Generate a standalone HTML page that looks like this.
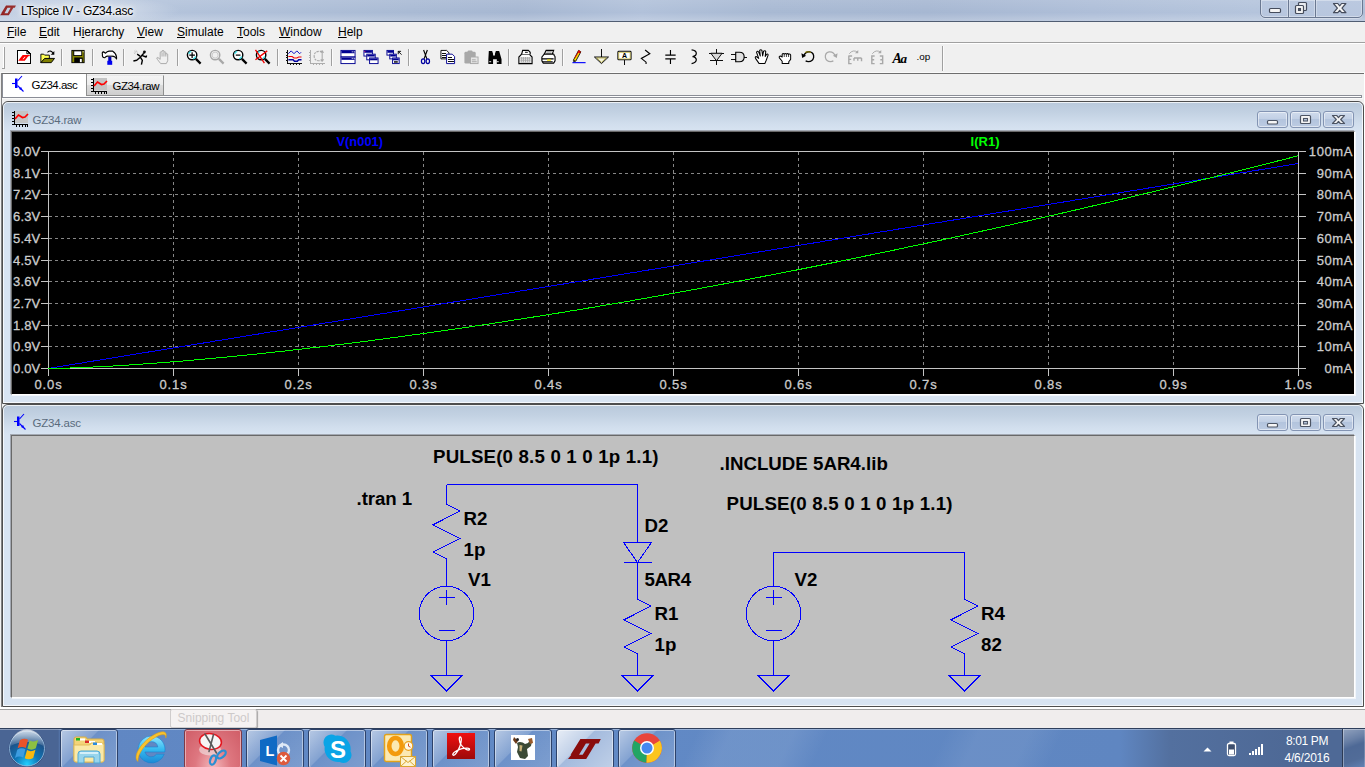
<!DOCTYPE html>
<html lang="en">
<head>
<meta charset="utf-8">
<title>LTspice IV - GZ34.asc</title>
<style>
html,body{margin:0;padding:0}
body{width:1365px;height:767px;overflow:hidden;position:relative;background:#f0f0f0;font-family:"Liberation Sans",Arial,sans-serif;font-size:12px;color:#000}
.abs{position:absolute}
#titlebar{left:0;top:0;width:1365px;height:21px;background:linear-gradient(90deg,#bccae0 0,#b3c3db 12%,#a9bad4 30%,#a6b7d2 38%,#b1c1da 47%,#a8b9d3 56%,#a6b7d2 68%,#aebed8 80%,#b4c4dc 92%,#adbdd7 100%);border-bottom:1px solid #505d72}
#titlebar:after{content:"";position:absolute;left:0;right:0;top:0;height:21px;background:linear-gradient(180deg,rgba(255,255,255,.10) 0,rgba(255,255,255,0) 60%,rgba(255,255,255,.22) 100%)}
#title{left:21px;top:4px;font-size:12px;line-height:15px;letter-spacing:-.25px;white-space:nowrap;color:#000;text-shadow:0 0 6px #fff,0 0 6px #fff,0 0 3px #fff}
#capbtns{left:1260px;top:-1px;width:101px;height:17px;border:1px solid #6a7891;border-radius:0 0 5px 5px;background:linear-gradient(180deg,#bbc9e0 0,#b7c6de 100%);box-shadow:inset 0 0 0 1px rgba(255,255,255,.35),0 1px 0 rgba(255,255,255,.35)}
#capbtns i{position:absolute;top:0;width:1px;height:17px;background:#6a7891;box-shadow:1px 0 0 rgba(255,255,255,.3),-1px 0 0 rgba(255,255,255,.3)}
#menubar{left:0;top:22px;width:1365px;height:20px;background:#f0f0f0;border-bottom:1px solid #a0a0a0}
#menubar span{position:absolute;top:3px;line-height:15px;white-space:nowrap}
#menubar u{text-decoration:underline}
#toolbar{left:0;top:43px;width:1365px;height:29px;background:#f0f0f0;border-top:1px solid #fff;box-sizing:border-box}
.tsep{position:absolute;top:5px;width:1px;height:17px;background:#a0a0a0;border-right:1px solid #fbfbfb}
.tb{position:absolute;top:5px;width:16px;height:16px}
#tabs{left:0;top:72px;width:1365px;height:29px;background:#f0f0f0}
.tab{position:absolute;box-sizing:border-box;white-space:nowrap}
.mdi{position:absolute;left:2px;width:1362px;height:303px;box-sizing:border-box;border:1px solid #4e4e4e;border-radius:6px 6px 0 0;background:linear-gradient(180deg,#b9c9db 0,#c2d1e2 10px,#d1deed 22px,#d8e4f2 30px,#d8e4f2 100%)}
.mdi:before{content:"";position:absolute;left:0;top:0;right:0;bottom:0;border:1px solid rgba(255,255,255,.75);border-radius:5px 5px 0 0}
.mtitle{position:absolute;left:29.500px;top:10.500px;line-height:15px;font-size:11.500px;letter-spacing:-.2px;color:#5a6b7d;white-space:nowrap}
.mbtn{position:absolute;top:9px;height:17px;box-sizing:border-box;border:1px solid #8394b3;border-radius:3px;background:linear-gradient(180deg,#cfdbec 0,#c2d0e5 45%,#b3c4dd 50%,#bccbe2 100%);box-shadow:inset 0 0 0 1px rgba(255,255,255,.5)}
.client{position:absolute;left:8px;top:29px;width:1344px;height:264px;box-sizing:border-box;border:1px solid;border-color:#696969 #fff #fff #696969;box-shadow:-1px -1px 0 #a3a9b3,1px 1px 0 #f2f6fb}
#status{left:0;top:707px;width:1365px;height:21px;background:#f0eded;border-top:2px solid #fff;box-sizing:border-box}
#taskbar{left:0;top:728px;width:1365px;height:39px;background:linear-gradient(115deg,rgba(255,255,255,0) 0,rgba(255,255,255,0) 50.500%,rgba(255,255,255,.09) 53%,rgba(255,255,255,.09) 57.500%,rgba(255,255,255,0) 60%,rgba(255,255,255,0) 68.500%,rgba(255,255,255,.07) 71%,rgba(255,255,255,.07) 74.500%,rgba(255,255,255,0) 77%),linear-gradient(90deg,#4a6594 0,#4a6594 58px,#6087c3 62px,#6189c5 640px,#5f86c1 1120px,#53709f 1170px,#4e6996 1285px,#4e6996 100%);border-top:1px solid #2f3f5c;box-sizing:border-box}
#taskbar:before{content:"";position:absolute;left:0;right:0;top:0;height:1px;background:rgba(255,255,255,.35)}
.tbtn{position:absolute;top:0;width:58px;height:40px;box-sizing:border-box;border:1px solid #2d426a;border-radius:3px;background:linear-gradient(135deg,rgba(255,255,255,.55) 0,rgba(255,255,255,.22) 40%,rgba(255,255,255,.08) 41%,rgba(255,255,255,.18) 100%);box-shadow:inset 0 0 0 1px rgba(255,255,255,.45)}
.tico{position:absolute;top:4px}
.tray{color:#fff;font-size:12px;text-align:center;white-space:nowrap}
svg{display:block;overflow:visible}
</style>
</head>
<body>
<div id="titlebar" class="abs"></div>
<svg class="abs" style="left:0;top:5px" width="16" height="11" viewBox="0 0 33 20.500"><path d="M12.400 0H32.800L30.600 4.400H27.600L18.200 20H0L3.400 15.800H2.600ZM15.500 4.400L9.300 15.800H15.700L22 4.400Z" fill="#8c1515" fill-rule="evenodd"/></svg>
<div id="tglow" class="abs" style="left:-10px;top:0;width:190px;height:21px;background:radial-gradient(ellipse 50% 70% at 50% 50%,rgba(255,255,255,.42) 0,rgba(255,255,255,.28) 50%,rgba(255,255,255,0) 100%)"></div>
<div id="title" class="abs">LTspice IV - GZ34.asc</div>
<div id="capbtns" class="abs"><i style="left:27px"></i><i style="left:54px"></i>
<svg class="abs" style="left:0;top:0" width="101" height="17" viewBox="0 0 101 17">
<rect x="8.500" y="8.500" width="11" height="4" rx="1" fill="#f4f4f4" stroke="#454c5c" stroke-width="1.200"/>
<rect x="37.500" y="2.500" width="8" height="8" rx="1" fill="#e8ebf0" stroke="#454c5c" stroke-width="1.200"/>
<rect x="34.500" y="5.500" width="8" height="8" rx="1" fill="#f4f4f4" stroke="#454c5c" stroke-width="1.200"/><rect x="37.500" y="8.500" width="2" height="2" fill="#b8c7df" stroke="#454c5c" stroke-width="1.100"/>
<path d="M72.500 3.500h4.300l1.900 2.400l1.900-2.400h4.300l-3.900 4.600l3.900 4.600h-4.300l-1.900-2.400l-1.900 2.400h-4.300l3.900-4.600z" fill="#f4f4f4" stroke="#454c5c" stroke-width="1.200" stroke-linejoin="round"/>
</svg></div>
<div id="menubar" class="abs">
<span style="left:7px"><u>F</u>ile</span><span style="left:39px"><u>E</u>dit</span><span style="left:73px">H<u>i</u>erarchy</span><span style="left:137px"><u>V</u>iew</span><span style="left:177px"><u>S</u>imulate</span><span style="left:237px"><u>T</u>ools</span><span style="left:279px"><u>W</u>indow</span><span style="left:338px"><u>H</u>elp</span>
</div>
<div id="toolbar" class="abs">
<div class="abs" style="left:2px;top:3px;width:2px;height:21px;border-right:1px solid #a0a0a0;border-bottom:1px solid #a0a0a0;box-sizing:content-box;background:linear-gradient(90deg,#f0f0f0 0,#f0f0f0 1px,#fff 1px)"></div>
<svg class="tb" style="left:16px" width="16" height="17" viewBox="0 0 16 17" ><path d="M1.500 2.500h9.500l3.500 3.500v10.500h-13z" fill="#fff" stroke="#000" stroke-width="1.100" shape-rendering="crispEdges" transform="translate(0 -1)"/><path d="M11 1.500v3.500h3.500" fill="none" stroke="#000"/><g transform="translate(1.800 6.500) scale(.385 .3)"><path d="M12.400 0H32.800L30.600 4.400H27.600L18.200 20H0L3.400 15.800H2.600ZM17.900 5.400L12 14.800H14.700L20.600 5.400Z" fill="#ff0000" fill-rule="evenodd"/></g></svg>
<svg class="tb" style="left:39px" width="16" height="17" viewBox="0 0 16 17" ><path d="M1.500 14.500v-9h3l1 1h5v4h-5z" fill="#ffff50" stroke="#000"/><path d="M1.500 14.500l4-4.500h10.500l-3.500 4.500z" fill="#808000" stroke="#000"/><path d="M8.500 3.500q3.500-3 6 1" fill="none" stroke="#000" stroke-width="1.100"/><path d="M15.800 2.200v3.800h-3.800z" fill="#000"/></svg>
<div class="tsep" style="left:61px"></div>
<svg class="tb" style="left:70px" width="16" height="17" viewBox="0 0 16 17" ><rect x="1.500" y="1.500" width="13" height="13" fill="#8c8c00" stroke="#000"/><rect x="3" y="2" width="9.500" height="5.500" fill="#000"/><rect x="4" y="2.500" width="7.500" height="4" fill="#fff"/><rect x="13" y="2.500" width="1" height="1" fill="#fff"/><rect x="4" y="9" width="9" height="5.500" fill="#000"/><rect x="10" y="10.500" width="2" height="3.500" fill="#fff"/></svg>
<div class="tsep" style="left:92px"></div>
<svg class="tb" style="left:101px" width="16" height="17" viewBox="0 0 16 17" ><path d="M1 5.500Q0.300 3.300 2.200 3L4.300 4.500Q6 2.600 8 2.300H12Q15.500 4.500 16 8.500V10.500L14.300 8.500Q13 7.600 11 7.600H6Q4.500 8 3.500 9.300Q0.500 9.300 1 5.500Z" fill="#fff" stroke="#000" stroke-width="1.200" stroke-linejoin="round"/><path d="M6.500 6.800h5.500" stroke="#a0a0a0" stroke-width="1"/><rect x="7.200" y="8.300" width="3.300" height="5" fill="#0000b0"/><rect x="6.200" y="12.500" width="5.200" height="4.300" fill="#0000f0"/></svg>
<div class="tsep" style="left:123px"></div>
<svg class="tb" style="left:132px" width="16" height="17" viewBox="0 0 16 17" ><path d="M12 2l1.800.3l-.5 2.200l-1.800-.5z" fill="#000" stroke="#000" stroke-width=".8"/><path d="M12 4.500L8 9L4.500 12L1 12.800M5 5.500L8 7.500M8.500 9L10.500 12L9.500 16.500M10.500 7L14.500 8.500L15 7" fill="none" stroke="#000" stroke-width="1.500" stroke-linejoin="round"/><path d="M2 2l2 2M3.500 1.500l2 2M1.500 4l1.500 1" stroke="#a8a8a8" stroke-width=".8"/></svg>
<svg class="tb" style="left:155px" width="16" height="17" viewBox="0 0 16 17" ><path d="M5.500 15.500l-3.500-4.500q-1.500-2 0.500-2l2.500 2v-7.500q1-1.300 2 0v-1.500q1-1.300 2 0v1.500q1-1.300 2 0v2q1-1.300 2 0v7l-1.500 3z M7 4v4M9 3.500v4.500M11 4.500v3.500" fill="none" stroke="#a8a8a8"/></svg>
<div class="tsep" style="left:177px"></div>
<svg class="tb" style="left:186px" width="16" height="17" viewBox="0 0 16 17" ><circle cx="6" cy="6.500" r="5" fill="#fff" stroke="#000" stroke-width="1.500"/><path d="M2.300 5a4 4 0 0 1 2.700-2.500M9.800 8a4 4 0 0 1-2.800 2.500" stroke="#40e0e8" stroke-width="1.600" fill="none"/><path d="M3 6.500h6M6 3.500v6" stroke="#000" stroke-width="1.300"/><path d="M10 10.500l5 5" stroke="#000" stroke-width="2.400"/></svg>
<svg class="tb" style="left:209px" width="16" height="17" viewBox="0 0 16 17" ><circle cx="6" cy="6.500" r="5" fill="#f0f0f0" stroke="#a8a8a8" stroke-width="1.500"/><circle cx="6" cy="6.500" r="3.200" fill="none" stroke="#c8c8c8"/><path d="M10 10.500l5 5" stroke="#a8a8a8" stroke-width="2.400"/></svg>
<svg class="tb" style="left:232px" width="16" height="17" viewBox="0 0 16 17" ><circle cx="6" cy="6.500" r="5" fill="#fff" stroke="#000" stroke-width="1.500"/><path d="M2.300 5a4 4 0 0 1 2.700-2.500M9.800 8a4 4 0 0 1-2.800 2.500" stroke="#40e0e8" stroke-width="1.600" fill="none"/><path d="M3.500 6.500h5" stroke="#000" stroke-width="1.300"/><path d="M10 10.500l5 5" stroke="#000" stroke-width="2.400"/></svg>
<svg class="tb" style="left:255px" width="16" height="17" viewBox="0 0 16 17" ><circle cx="6" cy="6.500" r="5" fill="#fff" stroke="#000" stroke-width="1.500"/><path d="M2.300 5a4 4 0 0 1 2.700-2.500M9.800 8a4 4 0 0 1-2.800 2.500" stroke="#40e0e8" stroke-width="1.600" fill="none"/><path d="M10 10.500l5 5" stroke="#000" stroke-width="2.400"/><path d="M0 1l9.500 14M12.500 2L0 11.500" stroke="#f00000" stroke-width="1.400"/></svg>
<div class="tsep" style="left:277px"></div>
<svg class="tb" style="left:286px" width="16" height="17" viewBox="0 0 16 17" ><path d="M1.500 1v14.500M1 15.500h15M0 3.500h1M0 6.500h1M0 9.500h1M0 12.500h1M4.500 16v1M7.500 16v1M10.500 16v1M13.500 16v1" stroke="#000" shape-rendering="crispEdges"/><path d="M2 5l3-3l3 3l3-3l3 3l1.500-1.500" fill="none" stroke="#0000c0"/><path d="M2 8h4l2 1.500h3l2-1h3" fill="none" stroke="#f00000" stroke-width="1.200"/><path d="M2 11.500h5l1.500 1.500h3l1.500-1.500h3" fill="none" stroke="#0000a0" stroke-width="1.600"/></svg>
<svg class="tb" style="left:309px" width="16" height="17" viewBox="0 0 16 17" ><path d="M1.500 1v14.500M1 15.500h15M0 3.500h1M0 6.500h1M0 9.500h1M0 12.500h1M4.500 16v1M7.500 16v1M10.500 16v1M13.500 16v1" stroke="#a8a8a8" shape-rendering="crispEdges"/><path d="M13.500 2.500h-3q-5.500 0-5.500 5t5.500 5h3" fill="none" stroke="#a8a8a8" stroke-width="1.200" stroke-dasharray="2.500 1"/><path d="M13.500 2v11M12 4l1.500-2l1.500 2M12 11l1.500 2l1.500-2" fill="none" stroke="#a8a8a8" stroke-width="1.100"/></svg>
<div class="tsep" style="left:331px"></div>
<svg class="tb" style="left:340px" width="16" height="17" viewBox="0 0 16 17" ><rect x=".5" y="1.500" width="15" height="7" fill="#fff" stroke="#000090"/><rect x=".5" y="8.500" width="15" height="7" fill="#fff" stroke="#000090"/><rect x="1" y="2" width="14" height="2.500" fill="#000090"/><rect x="1" y="9" width="14" height="2.500" fill="#000090"/><rect x="12" y="2.500" width="1" height="1" fill="#fff"/><rect x="14" y="2.500" width="1" height="1" fill="#fff"/><rect x="12" y="9.500" width="1" height="1" fill="#fff"/><rect x="14" y="9.500" width="1" height="1" fill="#fff"/></svg>
<svg class="tb" style="left:363px" width="16" height="17" viewBox="0 0 16 17" ><rect x="0.5" y="1.5" width="9" height="6" fill="#fff" stroke="#000090"/><rect x="1" y="2" width="8" height="2" fill="#000090"/><rect x="3.5" y="5.5" width="9" height="6" fill="#fff" stroke="#000090"/><rect x="4" y="6" width="8" height="2" fill="#000090"/><rect x="6.5" y="9.5" width="9" height="6" fill="#fff" stroke="#000090"/><rect x="7" y="10" width="8" height="2" fill="#000090"/><rect x="1" y="2" width="1" height="1" fill="#f06"/></svg>
<svg class="tb" style="left:386px" width="16" height="17" viewBox="0 0 16 17" ><rect x="0.5" y="1.5" width="7" height="5" fill="#fff" stroke="#000090"/><rect x="1" y="2" width="6" height="2" fill="#000090"/><rect x="3.5" y="5.5" width="7" height="5" fill="#fff" stroke="#000090"/><rect x="4" y="6" width="6" height="2" fill="#000090"/><rect x="6.5" y="9.5" width="7" height="6" fill="#fff" stroke="#000090"/><rect x="7" y="10" width="6" height="2" fill="#000090"/><rect x="8" y="13" width="4" height="1.500" fill="#000"/><path d="M12.500 2.500h3M12.500 2.500v3M12.500 2.500l3.500 3.500" stroke="#000" fill="none"/></svg>
<div class="tsep" style="left:408px"></div>
<svg class="tb" style="left:417px" width="16" height="17" viewBox="0 0 16 17" ><path d="M6.500 1l3.500 9.500M10.500 1l-3.500 9.500" stroke="#000" stroke-width="1.200"/><ellipse cx="6" cy="13" rx="1.800" ry="2.500" fill="none" stroke="#0000a0" stroke-width="1.300"/><ellipse cx="11" cy="13" rx="1.800" ry="2.500" fill="none" stroke="#0000a0" stroke-width="1.300"/></svg>
<svg class="tb" style="left:440px" width="16" height="17" viewBox="0 0 16 17" ><path d="M.5 1.500h6l2.500 2.500v6.500h-8.500z" fill="#fff" stroke="#000"/><path d="M2 4.500h4M2 6.500h5M2 8.500h5" stroke="#000" shape-rendering="crispEdges"/><path d="M6.500 5.500h6l2.500 2.500v7.500h-8.500z" fill="#fff" stroke="#000090"/><path d="M8 9.500h4M8 11.500h6M8 13.500h6" stroke="#000" shape-rendering="crispEdges"/></svg>
<svg class="tb" style="left:463px" width="16" height="17" viewBox="0 0 16 17" ><rect x="1" y="3" width="12" height="12.500" rx="1.500" fill="#a8a8a8"/><rect x="4.500" y="1.500" width="5" height="3" rx="1" fill="#a8a8a8"/><rect x="7.500" y="8.500" width="8" height="7" fill="#e4e4e4" stroke="#a8a8a8"/><path d="M9 11.500h4M9 13.500h5" stroke="#a8a8a8"/></svg>
<svg class="tb" style="left:486px" width="16" height="17" viewBox="0 0 16 17" ><path d="M2.500 2h3.500l1 3v2h2v-2l1-3h3.500l2.500 9v5h-5v-5h-4v5h-5v-5z" fill="#000"/><path d="M3 13.500h2M11 13.500h2" stroke="#fff"/></svg>
<div class="tsep" style="left:508px"></div>
<svg class="tb" style="left:517px" width="16" height="17" viewBox="0 0 16 17" ><path d="M1.500 15.500v-7l3-3h8l3 3v7z" fill="#fff" stroke="#000" stroke-width="1.200"/><path d="M4.500 5.500l1-4h6l2 2v2" fill="#fff" stroke="#000" stroke-width="1.200"/><path d="M8 3.500h3" stroke="#000"/><rect x="3" y="8.500" width="11" height="6" fill="#a8a8a8"/><path d="M3 9.500h11M3 11.500h11M3 13.500h11" stroke="#fff" stroke-dasharray="1 1"/></svg>
<svg class="tb" style="left:540px" width="16" height="17" viewBox="0 0 16 17" ><path d="M4 5.500l2-4h8l-1.500 4" fill="#fff" stroke="#000" stroke-width="1.200"/><path d="M6.500 3h5.500M6 4.500h5.500" stroke="#606060" stroke-width=".8"/><path d="M1.500 8.500l2.500-3h10l1.500 3v4l-1.500 2.500h-11l-1.500-2.500z" fill="#fff" stroke="#000" stroke-width="1.200"/><path d="M1.500 10.500h12.500M2 13.500h11" stroke="#000" stroke-width="1.200"/><rect x="7" y="11" width="4" height="1.500" fill="#f0e000"/><path d="M14 6l1.500 2.500v4" stroke="#606060" stroke-dasharray="1 1" fill="none"/></svg>
<div class="tsep" style="left:562px"></div>
<svg class="tb" style="left:571px" width="16" height="17" viewBox="0 0 16 17" ><path d="M1 14.500h14" stroke="#0000ff" stroke-width="1.200"/><path d="M2 12l5.500-10.500l2.500 1.500l-5.500 10z" fill="#f8e000" stroke="#000" stroke-width=".9"/><path d="M7.500 1.500l2.500 1.500l-1 1.800l-2.500-1.500z" fill="#e00000"/><path d="M2 12l0 2l2.500-1z" fill="#000"/><path d="M3.500 9.500l5-8" stroke="#e00000" stroke-width="1"/></svg>
<svg class="tb" style="left:593px" width="16" height="17" viewBox="0 0 16 17" ><path d="M8.500 0v8" stroke="#000" shape-rendering="crispEdges"/><path d="M1 8.500h15l-7.500 7z" fill="#f6f4e0" stroke="#000"/><path d="M3.500 9.500h10l-5 4.700z" fill="none" stroke="#a09a30" stroke-width=".8"/></svg>
<svg class="tb" style="left:616px" width="16" height="17" viewBox="0 0 16 17" ><rect x="1.500" y="2.500" width="14" height="9" rx="1" fill="#fff" stroke="#000" stroke-width="1.100"/><rect x="2.500" y="3.500" width="12" height="7" fill="none" stroke="#c0b030" stroke-width=".7"/><path d="M8.500 12v4.500" stroke="#000" shape-rendering="crispEdges"/><text x="8.500" y="10" text-anchor="middle" font-family="Liberation Sans, Arial, sans-serif" font-weight="bold" font-size="7.500" fill="#000">A</text></svg>
<svg class="tb" style="left:639px" width="16" height="17" viewBox="0 0 16 17" ><path d="M6 1l5 4l-9 5l5 4v2" fill="none" stroke="#000" stroke-width="1.200"/></svg>
<svg class="tb" style="left:662px" width="16" height="17" viewBox="0 0 16 17" ><path d="M8.500 1v5.500M8.500 10.500v5.500" stroke="#000" stroke-width="1.200"/><path d="M3 6.500h11M3 10.500h11" stroke="#000" stroke-width="1.400"/></svg>
<svg class="tb" style="left:685px" width="16" height="17" viewBox="0 0 16 17" ><path d="M6.500 1q5 0.500 5 3.500q0 3-4 3.500q4 0.500 4 3.500q0 3-5 4" fill="none" stroke="#000" stroke-width="1.300"/></svg>
<svg class="tb" style="left:708px" width="16" height="17" viewBox="0 0 16 17" ><path d="M8.500 0v16.500M1 4.500h15M2 12.500h13" stroke="#000" shape-rendering="crispEdges"/><path d="M2.500 4.500h12l-6 8z" fill="#d8d8d8" stroke="#000"/></svg>
<svg class="tb" style="left:731px" width="16" height="17" viewBox="0 0 16 17" ><path d="M4.500 3.500h4q5 0 5 5t-5 5h-4z" fill="#e0e0e0" stroke="#000" stroke-width="1.200"/><path d="M0 5.500h4.500M0 11.500h4.500M13.500 8.500h2.500" stroke="#000" shape-rendering="crispEdges"/></svg>
<svg class="tb" style="left:754px" width="16" height="17" viewBox="0 0 16 17" ><path d="M5 15.500l-3.500-5q-1.500-2.300 0.500-2.500l2.500 2l-2.300-6.500q0.600-1.800 2.200-0.500l1.800 4.500l-0.700-6q1.200-1.500 2.400 0l0.800 5.800l1-5q1.500-1.200 2.300 0.300l-0.600 5.400l1.600-2.500q1.500-.5 1.500 1l-2 5.500l-1.500 3.500z" fill="#fff" stroke="#000" stroke-width="1.100" stroke-linejoin="round"/></svg>
<svg class="tb" style="left:777px" width="16" height="17" viewBox="0 0 16 17" ><path d="M5 15.500v-2.500l-3-3.500q-.7-2 1.300-2l1.700 1v-3q1-1.500 2.200 0q1-1.500 2.300 0q1.200-1.300 2.300 0.200q1.400-1 2.200 0.600v4.700l-2 2.500v2z" fill="#fff" stroke="#000" stroke-width="1.100" stroke-linejoin="round"/><path d="M7.200 5.500v3M9.500 5.500v3M11.800 5.700v2.800" stroke="#000" stroke-width=".8"/></svg>
<svg class="tb" style="left:800px" width="16" height="17" viewBox="0 0 16 17" ><path d="M3.500 7.500q1.500-5 6.500-4.500q4.500 1 4 6q-1 4.500-5.500 4.500q-2 0-3-1" fill="none" stroke="#000" stroke-width="1.400"/><path d="M5 3.800q3-1.800 6 0" fill="none" stroke="#908000" stroke-width="1.200"/><path d="M1 4.500l0.800 5l4.200-2.300z" fill="#000"/></svg>
<svg class="tb" style="left:823px" width="16" height="17" viewBox="0 0 16 17" ><path d="M12.500 7.500q-1.500-5-6.500-4.500q-4.500 1-4 6q1 4.500 5.500 4.500q2 0 3-1" fill="none" stroke="#a8a8a8" stroke-width="1.300"/><path d="M15 4.500l-0.800 5l-4.200-2.300z" fill="#a8a8a8"/></svg>
<svg class="tb" style="left:846px" width="16" height="17" viewBox="0 0 16 17" ><path d="M2.500 7v8.500h3M2.500 11h2.500M2.500 7.500h3.500M8 9.500h8M8 9.500v3M12 9.500v3M16 9.500v3.500" fill="none" stroke="#a8a8a8" stroke-width="1.500"/><path d="M3 5q4-5 9-1.500" fill="none" stroke="#a8a8a8"/><path d="M12.500 1v3.500h-3.500z" fill="#a8a8a8"/></svg>
<svg class="tb" style="left:869px" width="16" height="17" viewBox="0 0 16 17" ><path d="M5.500 7.500h-3v8h3M2.500 11.500h2.500M11 7.500h3v8h-3M14 11.500h-2.500" fill="none" stroke="#a8a8a8" stroke-width="1.500"/><path d="M3 5q4-5 9-1.500" fill="none" stroke="#a8a8a8"/><path d="M12.500 1v3.500h-3.500z" fill="#a8a8a8"/></svg>
<svg class="tb" style="left:892px" width="16" height="17" viewBox="0 0 16 17" ><text x="0" y="14.500" font-family="Liberation Serif, serif" font-weight="bold" font-style="italic" font-size="15" fill="#000">A<tspan dx="-1.500" font-size="14">a</tspan></text></svg>
<svg class="tb" style="left:915px" width="16" height="17" viewBox="0 0 16 17" ><text x="1" y="12" font-family="Liberation Sans, Arial, sans-serif" font-size="10.500" fill="#000">.op</text></svg>
<div class="tsep" style="left:942px;top:2px;height:25px"></div>
</div>
<div id="tabs" class="abs">
<div class="abs" style="left:0;top:0;width:1365px;height:1px;background:#fafafa"></div>
<div class="abs" style="left:1px;top:1px;width:1363px;height:1px;background:#6e6e6e"></div>
<div class="abs" style="left:1px;top:1px;width:1px;height:634px;background:#828282"></div>
<div class="abs" style="left:1364px;top:1px;width:1px;height:636px;background:#fff"></div>
<div class="abs" style="left:2px;top:23px;width:1360px;height:3px;box-sizing:border-box;border:1px solid #8a8d96;background:#fff"></div>
<div class="abs" style="left:2px;top:26px;width:1361px;height:1px;background:#fafafa"></div>
<div class="tab" style="left:86px;top:3px;width:78px;height:21px;border:1px solid #8e8f8f;border-top-color:#e8e8e8;background:linear-gradient(180deg,#f4f4f4 0,#ececec 45%,#dcdcdc 50%,#cecece 100%)"></div>
<div class="tab" style="left:2px;top:2px;width:85px;height:22px;border-left:1px solid #8a8d96;border-right:1px solid #8e8f8f;background:#fff"></div>
<svg class="abs" style="left:12px;top:3px" width="13" height="17" viewBox="0 0 13 17"><path d="M0 8.500h3.500" stroke="#0000ff" stroke-width="1.100"/><path d="M4.250 3.500v9.500" stroke="#0000ff" stroke-width="2.500"/><path d="M5.500 6l4.500-5M5.500 10.500l6 6" stroke="#0000ff" stroke-width="1.100" fill="none"/><path d="M10.500 15.500l-3.600-1.400l2.200-2.200z" fill="#0000ff"/></svg><svg class="abs" style="left:91px;top:6px" width="17" height="16" viewBox="0 0 17 16"><rect x="3" y="0" width="13" height="12" fill="#c4c4c4"/><path d="M2.500 0v14M0 13.500h16M0 1.500h2M0 4.500h2M0 7.500h2M0 10.500h2M4.500 14v2M7.500 14v2M10.500 14v2M13.500 14v2M15.500 13v3" stroke="#000" shape-rendering="crispEdges"/><path d="M3 8l3.500-4l4 2.500l2.500-.5l3-3" fill="none" stroke="#ff0000" stroke-width="1.700"/></svg>
<span class="abs" style="left:31.500px;top:6px;line-height:15px;font-size:11.500px;letter-spacing:-.5px;white-space:nowrap">GZ34.asc</span>
<span class="abs" style="left:112.500px;top:7px;line-height:15px;font-size:11.500px;letter-spacing:-.5px;white-space:nowrap">GZ34.raw</span>
</div>
<div class="mdi" style="top:101px">
<svg class="abs" style="left:9px;top:9px" width="17" height="16" viewBox="0 0 17 16"><rect x="3" y="0" width="13" height="12" fill="#c4c4c4"/><path d="M2.500 0v14M0 13.500h16M0 1.500h2M0 4.500h2M0 7.500h2M0 10.500h2M4.500 14v2M7.500 14v2M10.500 14v2M13.500 14v2M15.500 13v3" stroke="#000" shape-rendering="crispEdges"/><path d="M3 8l3.500-4l4 2.500l2.500-.5l3-3" fill="none" stroke="#ff0000" stroke-width="1.700"/></svg>
<div class="mtitle">GZ34.raw</div>
<div class="mbtn" style="left:1254px;width:31px"><svg width="29" height="15" viewBox="0 0 29 15"><rect x="9.500" y="8.500" width="10" height="3.500" rx="1" fill="#f6f6f6" stroke="#4d5564" stroke-width="1.200"/></svg></div>
<div class="mbtn" style="left:1287px;width:31px"><svg width="29" height="15" viewBox="0 0 29 15"><rect x="9.500" y="3.500" width="10" height="8" rx="1" fill="#f6f6f6" stroke="#4d5564" stroke-width="1.200"/><rect x="12.500" y="6.500" width="4" height="2.500" fill="#b9c9e0" stroke="#4d5564" stroke-width="1.100"/></svg></div>
<div class="mbtn" style="left:1320px;width:31px"><svg width="29" height="15" viewBox="0 0 29 15"><path d="M8.500 3.500h4.200l1.800 2.100l1.800-2.100h4.200l-3.800 4l3.800 4h-4.200l-1.800-2.100l-1.800 2.100h-4.200l3.800-4z" fill="#f6f6f6" stroke="#4d5564" stroke-width="1.200" stroke-linejoin="round"/></svg></div>
<div class="client" style="background:#000">
<svg width="1342" height="262" viewBox="12 132 1342 262" style="position:absolute;left:0;top:0" font-family="Liberation Sans, Arial, sans-serif" font-size="13">
<path d="M49 173.5H1298M49 194.5H1298M49 216.5H1298M49 238.5H1298M49 260.5H1298M49 281.5H1298M49 303.5H1298M49 325.5H1298M49 346.5H1298M173.5 152V368M298.5 152V368M423.5 152V368M548.5 152V368M673.5 152V368M798.5 152V368M923.5 152V368M1048.5 152V368M1173.5 152V368" stroke="#868686" stroke-dasharray="3 3" fill="none" shape-rendering="crispEdges"/>
<path d="M41 151.5H1306M41 368.5H1306M48.5 151V376M1298.5 151V376M41 173.5H49M1298 173.5H1306M41 194.5H49M1298 194.5H1306M41 216.5H49M1298 216.5H1306M41 238.5H49M1298 238.5H1306M41 260.5H49M1298 260.5H1306M41 281.5H49M1298 281.5H1306M41 303.5H49M1298 303.5H1306M41 325.5H49M1298 325.5H1306M41 346.5H49M1298 346.5H1306M173.5 368V376M298.5 368V376M423.5 368V376M548.5 368V376M673.5 368V376M798.5 368V376M923.5 368V376M1048.5 368V376M1173.5 368V376" stroke="#c4c4c4" fill="none" shape-rendering="crispEdges"/>
<polyline points="48.0,368.5 53.0,367.7 58.0,366.9 63.0,366.0 68.0,365.2 73.0,364.4 78.0,363.6 83.0,362.8 88.0,361.9 93.0,361.1 98.0,360.3 103.0,359.5 108.0,358.7 113.0,357.8 118.0,357.0 123.0,356.2 128.0,355.4 133.0,354.6 138.0,353.7 143.0,352.9 148.0,352.1 153.0,351.3 158.0,350.5 163.0,349.6 168.0,348.8 173.0,348.0 178.0,347.2 183.0,346.4 188.0,345.5 193.0,344.7 198.0,343.9 203.0,343.1 208.0,342.3 213.0,341.4 218.0,340.6 223.0,339.8 228.0,339.0 233.0,338.2 238.0,337.3 243.0,336.5 248.0,335.7 253.0,334.9 258.0,334.1 263.0,333.2 268.0,332.4 273.0,331.6 278.0,330.8 283.0,330.0 288.0,329.2 293.0,328.3 298.0,327.5 303.0,326.7 308.0,325.9 313.0,325.1 318.0,324.2 323.0,323.4 328.0,322.6 333.0,321.8 338.0,321.0 343.0,320.1 348.0,319.3 353.0,318.5 358.0,317.7 363.0,316.9 368.0,316.0 373.0,315.2 378.0,314.4 383.0,313.6 388.0,312.8 393.0,311.9 398.0,311.1 403.0,310.3 408.0,309.5 413.0,308.7 418.0,307.8 423.0,307.0 428.0,306.2 433.0,305.4 438.0,304.6 443.0,303.7 448.0,302.9 453.0,302.1 458.0,301.3 463.0,300.5 468.0,299.6 473.0,298.8 478.0,298.0 483.0,297.2 488.0,296.4 493.0,295.5 498.0,294.7 503.0,293.9 508.0,293.1 513.0,292.3 518.0,291.4 523.0,290.6 528.0,289.8 533.0,289.0 538.0,288.2 543.0,287.3 548.0,286.5 553.0,285.7 558.0,284.9 563.0,284.1 568.0,283.2 573.0,282.4 578.0,281.6 583.0,280.8 588.0,280.0 593.0,279.1 598.0,278.3 603.0,277.5 608.0,276.7 613.0,275.9 618.0,275.0 623.0,274.2 628.0,273.4 633.0,272.6 638.0,271.8 643.0,270.9 648.0,270.1 653.0,269.3 658.0,268.5 663.0,267.7 668.0,266.8 673.0,266.0 678.0,265.2 683.0,264.4 688.0,263.6 693.0,262.7 698.0,261.9 703.0,261.1 708.0,260.3 713.0,259.5 718.0,258.6 723.0,257.8 728.0,257.0 733.0,256.2 738.0,255.4 743.0,254.6 748.0,253.7 753.0,252.9 758.0,252.1 763.0,251.3 768.0,250.5 773.0,249.6 778.0,248.8 783.0,248.0 788.0,247.2 793.0,246.4 798.0,245.5 803.0,244.7 808.0,243.9 813.0,243.1 818.0,242.3 823.0,241.4 828.0,240.6 833.0,239.8 838.0,239.0 843.0,238.2 848.0,237.3 853.0,236.5 858.0,235.7 863.0,234.9 868.0,234.1 873.0,233.2 878.0,232.4 883.0,231.6 888.0,230.8 893.0,230.0 898.0,229.1 903.0,228.3 908.0,227.5 913.0,226.7 918.0,225.9 923.0,225.0 928.0,224.2 933.0,223.4 938.0,222.6 943.0,221.8 948.0,220.9 953.0,220.1 958.0,219.3 963.0,218.5 968.0,217.7 973.0,216.8 978.0,216.0 983.0,215.2 988.0,214.4 993.0,213.6 998.0,212.7 1003.0,211.9 1008.0,211.1 1013.0,210.3 1018.0,209.5 1023.0,208.6 1028.0,207.8 1033.0,207.0 1038.0,206.2 1043.0,205.4 1048.0,204.5 1053.0,203.7 1058.0,202.9 1063.0,202.1 1068.0,201.3 1073.0,200.4 1078.0,199.6 1083.0,198.8 1088.0,198.0 1093.0,197.2 1098.0,196.3 1103.0,195.5 1108.0,194.7 1113.0,193.9 1118.0,193.1 1123.0,192.2 1128.0,191.4 1133.0,190.6 1138.0,189.8 1143.0,189.0 1148.0,188.1 1153.0,187.3 1158.0,186.5 1163.0,185.7 1168.0,184.9 1173.0,184.0 1178.0,183.2 1183.0,182.4 1188.0,181.6 1193.0,180.8 1198.0,180.0 1203.0,179.1 1208.0,178.3 1213.0,177.5 1218.0,176.7 1223.0,175.9 1228.0,175.0 1233.0,174.2 1238.0,173.4 1243.0,172.6 1248.0,171.8 1253.0,170.9 1258.0,170.1 1263.0,169.3 1268.0,168.5 1273.0,167.7 1278.0,166.8 1283.0,166.0 1288.0,165.2 1293.0,164.4 1298.0,163.6" stroke="#0000ff" fill="none" stroke-width="1" shape-rendering="crispEdges"/>
<polyline points="48.0,368.5 53.0,368.4 58.0,368.3 63.0,368.2 68.0,368.1 73.0,367.9 78.0,367.7 83.0,367.5 88.0,367.3 93.0,367.0 98.0,366.8 103.0,366.5 108.0,366.3 113.0,366.0 118.0,365.7 123.0,365.4 128.0,365.1 133.0,364.7 138.0,364.4 143.0,364.0 148.0,363.7 153.0,363.3 158.0,362.9 163.0,362.6 168.0,362.2 173.0,361.8 178.0,361.4 183.0,361.0 188.0,360.5 193.0,360.1 198.0,359.7 203.0,359.2 208.0,358.8 213.0,358.3 218.0,357.8 223.0,357.4 228.0,356.9 233.0,356.4 238.0,355.9 243.0,355.4 248.0,354.9 253.0,354.4 258.0,353.9 263.0,353.3 268.0,352.8 273.0,352.3 278.0,351.7 283.0,351.2 288.0,350.6 293.0,350.0 298.0,349.5 303.0,348.9 308.0,348.3 313.0,347.7 318.0,347.2 323.0,346.6 328.0,346.0 333.0,345.3 338.0,344.7 343.0,344.1 348.0,343.5 353.0,342.9 358.0,342.2 363.0,341.6 368.0,341.0 373.0,340.3 378.0,339.7 383.0,339.0 388.0,338.3 393.0,337.7 398.0,337.0 403.0,336.3 408.0,335.6 413.0,334.9 418.0,334.3 423.0,333.6 428.0,332.9 433.0,332.1 438.0,331.4 443.0,330.7 448.0,330.0 453.0,329.3 458.0,328.6 463.0,327.8 468.0,327.1 473.0,326.3 478.0,325.6 483.0,324.8 488.0,324.1 493.0,323.3 498.0,322.6 503.0,321.8 508.0,321.0 513.0,320.2 518.0,319.5 523.0,318.7 528.0,317.9 533.0,317.1 538.0,316.3 543.0,315.5 548.0,314.7 553.0,313.9 558.0,313.1 563.0,312.3 568.0,311.4 573.0,310.6 578.0,309.8 583.0,309.0 588.0,308.1 593.0,307.3 598.0,306.4 603.0,305.6 608.0,304.7 613.0,303.9 618.0,303.0 623.0,302.2 628.0,301.3 633.0,300.4 638.0,299.5 643.0,298.7 648.0,297.8 653.0,296.9 658.0,296.0 663.0,295.1 668.0,294.2 673.0,293.3 678.0,292.4 683.0,291.5 688.0,290.6 693.0,289.7 698.0,288.8 703.0,287.8 708.0,286.9 713.0,286.0 718.0,285.0 723.0,284.1 728.0,283.2 733.0,282.2 738.0,281.3 743.0,280.3 748.0,279.4 753.0,278.4 758.0,277.5 763.0,276.5 768.0,275.5 773.0,274.6 778.0,273.6 783.0,272.6 788.0,271.6 793.0,270.7 798.0,269.7 803.0,268.7 808.0,267.7 813.0,266.7 818.0,265.7 823.0,264.7 828.0,263.7 833.0,262.7 838.0,261.7 843.0,260.6 848.0,259.6 853.0,258.6 858.0,257.6 863.0,256.5 868.0,255.5 873.0,254.5 878.0,253.4 883.0,252.4 888.0,251.4 893.0,250.3 898.0,249.3 903.0,248.2 908.0,247.1 913.0,246.1 918.0,245.0 923.0,244.0 928.0,242.9 933.0,241.8 938.0,240.7 943.0,239.7 948.0,238.6 953.0,237.5 958.0,236.4 963.0,235.3 968.0,234.2 973.0,233.1 978.0,232.0 983.0,230.9 988.0,229.8 993.0,228.7 998.0,227.6 1003.0,226.5 1008.0,225.4 1013.0,224.3 1018.0,223.1 1023.0,222.0 1028.0,220.9 1033.0,219.7 1038.0,218.6 1043.0,217.5 1048.0,216.3 1053.0,215.2 1058.0,214.0 1063.0,212.9 1068.0,211.7 1073.0,210.6 1078.0,209.4 1083.0,208.3 1088.0,207.1 1093.0,205.9 1098.0,204.8 1103.0,203.6 1108.0,202.4 1113.0,201.3 1118.0,200.1 1123.0,198.9 1128.0,197.7 1133.0,196.5 1138.0,195.3 1143.0,194.1 1148.0,192.9 1153.0,191.7 1158.0,190.5 1163.0,189.3 1168.0,188.1 1173.0,186.9 1178.0,185.7 1183.0,184.5 1188.0,183.3 1193.0,182.1 1198.0,180.8 1203.0,179.6 1208.0,178.4 1213.0,177.2 1218.0,175.9 1223.0,174.7 1228.0,173.5 1233.0,172.2 1238.0,171.0 1243.0,169.7 1248.0,168.5 1253.0,167.2 1258.0,166.0 1263.0,164.7 1268.0,163.4 1273.0,162.2 1278.0,160.9 1283.0,159.7 1288.0,158.4 1293.0,157.1 1298.0,155.8" stroke="#00ff00" fill="none" stroke-width="1" shape-rendering="crispEdges"/>
<g fill="#cdcdcd" stroke="#cdcdcd" stroke-width="0.3" text-anchor="end">
<text x="40.5" y="156" letter-spacing=".2">9.0V</text>
<text x="40.5" y="178" letter-spacing=".2">8.1V</text>
<text x="40.5" y="199" letter-spacing=".2">7.2V</text>
<text x="40.5" y="221" letter-spacing=".2">6.3V</text>
<text x="40.5" y="243" letter-spacing=".2">5.4V</text>
<text x="40.5" y="265" letter-spacing=".2">4.5V</text>
<text x="40.5" y="286" letter-spacing=".2">3.6V</text>
<text x="40.5" y="308" letter-spacing=".2">2.7V</text>
<text x="40.5" y="330" letter-spacing=".2">1.8V</text>
<text x="40.5" y="351" letter-spacing=".2">0.9V</text>
<text x="40.5" y="373" letter-spacing=".2">0.0V</text>
<text x="1353" y="156" letter-spacing=".6">100mA</text>
<text x="1353" y="178" letter-spacing=".6">90mA</text>
<text x="1353" y="199" letter-spacing=".6">80mA</text>
<text x="1353" y="221" letter-spacing=".6">70mA</text>
<text x="1353" y="243" letter-spacing=".6">60mA</text>
<text x="1353" y="265" letter-spacing=".6">50mA</text>
<text x="1353" y="286" letter-spacing=".6">40mA</text>
<text x="1353" y="308" letter-spacing=".6">30mA</text>
<text x="1353" y="330" letter-spacing=".6">20mA</text>
<text x="1353" y="351" letter-spacing=".6">10mA</text>
<text x="1353" y="373" letter-spacing=".6">0mA</text>
</g>
<g fill="#cdcdcd" stroke="#cdcdcd" stroke-width="0.3" text-anchor="middle">
<text x="48.5" y="388.5" letter-spacing=".9">0.0s</text>
<text x="173.5" y="388.5" letter-spacing=".9">0.1s</text>
<text x="298.5" y="388.5" letter-spacing=".9">0.2s</text>
<text x="423.5" y="388.5" letter-spacing=".9">0.3s</text>
<text x="548.5" y="388.5" letter-spacing=".9">0.4s</text>
<text x="673.5" y="388.5" letter-spacing=".9">0.5s</text>
<text x="798.5" y="388.5" letter-spacing=".9">0.6s</text>
<text x="923.5" y="388.5" letter-spacing=".9">0.7s</text>
<text x="1048.5" y="388.5" letter-spacing=".9">0.8s</text>
<text x="1173.5" y="388.5" letter-spacing=".9">0.9s</text>
<text x="1298.5" y="388.5" letter-spacing=".9">1.0s</text>
</g>
<text x="336.500" y="146" font-size="13.700" textLength="46.500" lengthAdjust="spacingAndGlyphs" fill="#0000ff" font-weight="bold">V(n001)</text>
<text x="970.500" y="146" font-size="13.700" textLength="29" lengthAdjust="spacingAndGlyphs" fill="#00ff00" font-weight="bold">I(R1)</text>
</svg>
</div>
</div>
<div class="mdi" style="top:404px">
<svg class="abs" style="left:11px;top:8px" width="13" height="17" viewBox="0 0 13 17"><path d="M0 8.500h3.500" stroke="#0000ff" stroke-width="1.100"/><path d="M4.250 3.500v9.500" stroke="#0000ff" stroke-width="2.500"/><path d="M5.500 6l4.500-5M5.500 10.500l6 6" stroke="#0000ff" stroke-width="1.100" fill="none"/><path d="M10.500 15.500l-3.600-1.400l2.200-2.200z" fill="#0000ff"/></svg>
<div class="mtitle">GZ34.asc</div>
<div class="mbtn" style="left:1254px;width:31px"><svg width="29" height="15" viewBox="0 0 29 15"><rect x="9.500" y="8.500" width="10" height="3.500" rx="1" fill="#f6f6f6" stroke="#4d5564" stroke-width="1.200"/></svg></div>
<div class="mbtn" style="left:1287px;width:31px"><svg width="29" height="15" viewBox="0 0 29 15"><rect x="9.500" y="3.500" width="10" height="8" rx="1" fill="#f6f6f6" stroke="#4d5564" stroke-width="1.200"/><rect x="12.500" y="6.500" width="4" height="2.500" fill="#b9c9e0" stroke="#4d5564" stroke-width="1.100"/></svg></div>
<div class="mbtn" style="left:1320px;width:31px"><svg width="29" height="15" viewBox="0 0 29 15"><path d="M8.500 3.500h4.200l1.800 2.100l1.800-2.100h4.200l-3.800 4l3.800 4h-4.200l-1.800-2.100l-1.800 2.100h-4.200l3.800-4z" fill="#f6f6f6" stroke="#4d5564" stroke-width="1.200" stroke-linejoin="round"/></svg></div>
<div class="client" style="background:#c0c0c0;top:30px;left:8px;width:1344px;height:263px">
<svg width="1342" height="261" viewBox="12 436 1342 261" style="position:absolute;left:0;top:0" font-family="Liberation Sans, Arial, sans-serif" font-size="18.7" font-weight="bold">
<g fill="none" stroke="#0000ff" stroke-width="1" shape-rendering="crispEdges"><path d="M446.5 484.5H637.5M446.5 484.5V498M446.5 497.5V504.3L460.1 511.1L432.9 524.8L460.1 538.4L432.9 552.1L446.5 558.9V565.7M446.5 565.7V579.4M446.5 579.4V586.2M446.5 640.8V647.6M439.0 597.0H454.5M446.5 590.0V604.5M439.0 630.5H454.5M446.5 647.6V675.5M431.0 675.5H462.0L446.5 691.0ZM637.5 484.5V542.5M623.5 542.5H651.5L637.5 562.5ZM623.5 562.5H652.0M637.5 562.5V592.5M637.5 592.5V599.3L651.1 606.1L623.9 619.8L651.1 633.4L623.9 647.1L637.5 653.9V660.7M637.5 660.7V675.5M622.0 675.5H653.0L637.5 691.0ZM773.5 579.4V552.5H964.5V592.5M773.5 579.4V586.2M773.5 640.8V647.6M766.0 597.0H781.5M773.5 590.0V604.5M766.0 630.5H781.5M773.5 647.6V675.5M758.0 675.5H789.0L773.5 691.0ZM964.5 592.5V599.3L978.1 606.1L950.9 619.8L978.1 633.4L950.9 647.1L964.5 653.9V660.7M964.5 660.7V675.5M949.0 675.5H980.0L964.5 691.0Z"/><circle cx="446.5" cy="613.5" r="27.3"/><circle cx="773.5" cy="613.5" r="27.3"/></g>
<text x="433" y="462.5" textLength="225.5">PULSE(0 8.5 0 1 0 1p 1.1)</text>
<text x="356.5" y="504.5" textLength="55.7">.tran 1</text>
<text x="463.5" y="525">R2</text>
<text x="463.5" y="556">1p</text>
<text x="468" y="585.5">V1</text>
<text x="644.5" y="531.5">D2</text>
<text x="644.5" y="585.5" textLength="46.6">5AR4</text>
<text x="654.5" y="619.5">R1</text>
<text x="654.5" y="650.5">1p</text>
<text x="719.5" y="470" textLength="168.3">.INCLUDE 5AR4.lib</text>
<text x="726.5" y="509.5" textLength="226">PULSE(0 8.5 0 1 0 1p 1.1)</text>
<text x="794.5" y="585.5">V2</text>
<text x="981" y="619.5">R4</text>
<text x="981" y="651">82</text>
</svg>
</div>
</div>
<div id="status" class="abs"><div class="abs" style="left:0;top:0;width:1365px;height:1px;background:#a0a0a0"></div>
<div class="abs" style="left:170px;top:0;width:87px;height:19px;box-sizing:border-box;border:1px solid #cfcccc;border-radius:2px;background:#f5f2f2;color:#cdc9c9;font-size:12px;line-height:16px;text-align:center;box-shadow:1px 1px 1px rgba(0,0,0,.3)">Snipping Tool</div>
</div>
<div id="taskbar" class="abs">
<svg class="abs" style="left:8px;top:0" width="38" height="39" viewBox="0 0 38 39">
<defs>
<radialGradient id="orb" cx=".5" cy=".95" r=".95"><stop offset="0" stop-color="#22d0ff"/><stop offset=".35" stop-color="#0f78b8"/><stop offset=".75" stop-color="#1d4f86"/><stop offset="1" stop-color="#4a78ad"/></radialGradient>
<linearGradient id="orbhi" x1="0" y1="0" x2="0" y2="1"><stop offset="0" stop-color="#fff" stop-opacity=".75"/><stop offset="1" stop-color="#fff" stop-opacity=".12"/></linearGradient>
</defs>
<circle cx="19" cy="19.500" r="18.300" fill="#2a4674"/>
<circle cx="19" cy="19.500" r="17.500" fill="url(#orb)" stroke="#9fc3e6" stroke-width=".8"/>
<path d="M2.500 17a16.500 16.500 0 0 1 33 0c-9-5.500-24-5.500-33 0z" fill="url(#orbhi)"/>
<g transform="translate(19 20) scale(1.32) translate(-17.600 -19.500)">
<path d="M12.200 12.800c2.200-1.300 4.300-1.400 6.200-.3l-1.700 6.200c-2-1.100-4.100-1-6.200.3z" fill="#e8532a"/>
<path d="M19.600 13c2.100 1.200 4.200 1.100 6.400-.3l-1.700 6.300c-2.200 1.300-4.300 1.400-6.400.2z" fill="#8cc043"/>
<path d="M10.200 20c2.100-1.300 4.200-1.400 6.200-.3l-1.700 6.300c-2-1.100-4.100-1-6.200.3z" fill="#3d9de0"/>
<path d="M17.600 20.300c2.100 1.200 4.200 1.100 6.400-.3l-1.700 6.300c-2.200 1.300-4.300 1.400-6.400.2z" fill="#f9b90f"/>
</g>
</svg>
<div class="tbtn" style="left:60px"></div>
<div class="tbtn" style="left:184px;border-color:#7c3a48;background:radial-gradient(ellipse at 50% 100%,#f4b9bd 0,#de7780 45%,#cf5c66 100%)"></div>
<div class="tbtn" style="left:246px"></div>
<div class="tbtn" style="left:308px"></div>
<div class="tbtn" style="left:370px"></div>
<div class="tbtn" style="left:432px"></div>
<div class="tbtn" style="left:494px"></div>
<div class="tbtn" style="left:556px;background:linear-gradient(135deg,rgba(255,255,255,.85) 0,rgba(255,255,255,.6) 40%,rgba(255,255,255,.42) 41%,rgba(255,255,255,.6) 100%)"></div>
<div class="tbtn" style="left:618px"></div>
<!-- explorer -->
<svg class="tico" style="left:73px;top:4px" width="32" height="32" viewBox="0 0 32 32">
<path d="M1 6q0-2 2-2h9q2 0 2 2h15q2 0 2 2v19q0 2-2 2H3q-2 0-2-2z" fill="#f3d479" stroke="#d9ae45"/>
<rect x="3" y="5" width="4" height="2.500" fill="#1fb51f"/><rect x="7" y="5.500" width="5" height="2" fill="#fff"/>
<rect x="12" y="7.500" width="4" height="2.500" fill="#d62a2a"/><rect x="16" y="8" width="6" height="2" fill="#fff"/>
<path d="M1 12h15q2 0 2-2h11q2 0 2 2v15q0 2-2 2H3q-2 0-2-2z" fill="#fae9a8" stroke="#e2bd5a"/>
<rect x="20" y="9.500" width="4" height="2.500" fill="#2a8be0"/><rect x="24" y="10" width="5" height="2" fill="#fff"/>
<path d="M5 30v-9q0-3 3-3h16q3 0 3 3v9h-6v-6h-10v6z" fill="#8fd3f2" stroke="#4fa9d6" fill-opacity=".92"/>
<path d="M7 20h18" stroke="#e9f8ff" stroke-width="1.500"/>
</svg>
<!-- IE -->
<svg class="tico" style="left:133px;top:2px" width="36" height="34" viewBox="0 0 36 34">
<defs><linearGradient id="ieg" x1="0" y1="0" x2="0" y2="1"><stop offset="0" stop-color="#8fe6ff"/><stop offset=".5" stop-color="#35b9f0"/><stop offset="1" stop-color="#1b8ad6"/></linearGradient></defs>
<path d="M18.500 5a13.500 13.500 0 1 0 12.700 18.200h-7.600a6.600 6.600 0 0 1-11.700-2.200h19.900a13.500 13.500 0 0 0-13.300-16zm-6.500 11a6.500 6.500 0 0 1 12.800 0z" fill="url(#ieg)" stroke="#1b7fcc" stroke-width=".6"/>
<path d="M5 30.500c-7-5.500 6.500-24 21-29c5.500-1.700 8.500 0 6.800 5.500c.3-4.500-3.800-4-9-1.500c-11.500 6-19.500 18-18.800 25z" fill="#f9c22e" stroke="#dc9d14" stroke-width=".6"/>
</svg>
<!-- snipping -->
<svg class="tico" style="left:196px;top:2px" width="36" height="36" viewBox="0 0 36 36">
<ellipse cx="14" cy="18.500" rx="11" ry="6" fill="#f0d8da" opacity=".7"/>
<ellipse cx="14.500" cy="10.500" rx="11" ry="7.800" transform="rotate(8 14.500 10.500)" fill="#f6f4f4" stroke="#e2161f" stroke-width="1.500"/>
<path d="M9 3l11.500 19M17.500 3.500l-4.500 17" stroke="#5a5a5a" stroke-width="1.600" stroke-linecap="round"/>
<ellipse cx="25.500" cy="23.500" rx="5" ry="2.800" transform="rotate(-40 25.500 23.500)" fill="none" stroke="#2b8fd2" stroke-width="2.300"/>
<ellipse cx="17" cy="29" rx="2.700" ry="4.800" transform="rotate(20 17 29)" fill="none" stroke="#2b8fd2" stroke-width="2.300"/>
</svg>
<!-- lync -->
<svg class="tico" style="left:259px;top:4px" width="34" height="34" viewBox="0 0 34 34">
<path d="M1 7l17-4.500v30L1 28z" fill="#0f6ac4"/>
<text x="6.500" y="23" font-family="Liberation Sans, Arial, sans-serif" font-weight="bold" font-size="14.500" fill="#fff">L</text>
<circle cx="24.500" cy="17" r="5.500" fill="none" stroke="#dfe9f6" stroke-width="2.400"/><path d="M19 12.500l5-3.500v6z" fill="#dfe9f6"/>
<circle cx="24.500" cy="25.500" r="6.700" fill="#de5a3c"/>
<path d="M21.500 22.500l6 6M27.500 22.500l-6 6" stroke="#fff" stroke-width="1.800"/>
</svg>
<!-- skype -->
<svg class="tico" style="left:321px;top:3px" width="34" height="34" viewBox="0 0 34 34">
<path d="M10 2.500a8 8 0 0 1 4.500 1.200a13.500 13.500 0 0 1 15 15.500a8 8 0 0 1-10.800 10.800a13.500 13.500 0 0 1-15-15.300A8 8 0 0 1 10 2.500z" fill="#0aa4e6"/>
<text x="17" y="25.500" text-anchor="middle" font-family="Liberation Sans, Arial, sans-serif" font-weight="bold" font-size="24" fill="#fff">S</text>
</svg>
<!-- outlook -->
<svg class="tico" style="left:383px;top:3px" width="36" height="36" viewBox="0 0 36 36">
<rect x="1.500" y="2.500" width="27" height="27" rx="2" fill="#fbe9b2" stroke="#e2a21a" stroke-width="1.400"/>
<ellipse cx="12.500" cy="14" rx="6.300" ry="8" fill="none" stroke="#f39a0d" stroke-width="4.600"/>
<circle cx="25.500" cy="14" r="4.300" fill="#fff8e6" stroke="#e8a01c" stroke-width="1.200"/><path d="M25.500 11.500v2.700l2 1" stroke="#d4541c" fill="none"/>
<path d="M17.500 24.500h15v10h-15z" fill="#fdf3cf" stroke="#d9a530"/><path d="M17.500 24.500l7.500 6l7.500-6M17.500 34.500l6-5.500M32.500 34.500l-6-5.500" stroke="#d9a530" fill="none"/>
</svg>
<!-- adobe -->
<svg class="tico" style="left:447px;top:4px" width="28" height="27" viewBox="0 0 28 27">
<defs><linearGradient id="adg" x1="0" y1="0" x2="0" y2="1"><stop offset="0" stop-color="#f01010"/><stop offset="1" stop-color="#9c0a0a"/></linearGradient></defs>
<rect width="28" height="26" fill="url(#adg)"/>
<path d="M6 22c-1.500-1.500 4-5 9-6.300c4-1 8-.8 7.500.8c-.6 1.500-5.500-.4-8.300-4.500c-2.200-3.200-2.400-8-1-8s1.700 4-.4 9.500c-2 5.200-5.300 9.800-6.800 8.500z" fill="none" stroke="#fff" stroke-width="1.300"/>
</svg>
<!-- mole -->
<svg class="tico" style="left:511px;top:6px" width="24" height="26" viewBox="0 0 24 26">
<rect width="24" height="25" fill="#fff"/>
<path d="M6 8c2-2 6-1 8 1l3-1l2-3l2 1l-1 5l-4 3l1 7l-3 3l-5-1l-3-6l1-5z" fill="#3b4a36"/>
<path d="M3 2l4 4-2 3-3-4z" fill="#6b3a1a"/><path d="M17 4l4-1 1 5-3 1z" fill="#9a5a2a"/>
<path d="M8.500 10l3 .5-1 6-2-.5z" fill="#c9b37a"/><circle cx="6.500" cy="4.500" r="1.500" fill="#222"/>
</svg>
<!-- ltspice -->
<svg class="tico" style="left:568px;top:10px" width="34" height="21" viewBox="0 0 34 21">
<path d="M12.400 0H32.800L30.600 4.400H27.600L18.200 20H0L3.400 15.800H2.600ZM17.900 4.400L11 15.800H14.700L21.600 4.400Z" fill="#8a0c0c" fill-rule="evenodd"/>
</svg>
<!-- chrome -->
<svg class="tico" style="left:632px;top:4px" width="30" height="30" viewBox="-15 -15 30 30">
<circle r="14.800" fill="#e8453c"/>
<path d="M0 0L-12.820 -7.400A14.800 14.800 0 0 0 -0.500 14.790Z" fill="#22a565"/>
<path d="M0 0L-0.500 14.790A14.800 14.800 0 0 0 12.820 -7.400Z" fill="#fbc51d"/>
<path d="M0 0L12.820 -7.400L0 -7.400Z" fill="#e8453c"/>
<circle r="7" fill="#fff"/><circle r="5.500" fill="#4688f1"/>
</svg>
<!-- tray -->
<svg class="abs" style="left:1200px;top:10px" width="66" height="22" viewBox="0 0 66 22">
<path d="M3.500 12.500l4-4l4 4z" fill="#fff"/>
<rect x="27.500" y="4.500" width="8" height="12" rx="1.500" fill="#3e4f6e" stroke="#fff" stroke-width="1.300"/><rect x="29.500" y="2.500" width="4" height="2" fill="#fff"/><rect x="29" y="10.500" width="5" height="5" fill="#fff"/>
<path d="M49 16h2v-2h-2zM52 16h2v-4h-2zM55 16h2v-6h-2zM58 16h2v-8.500h-2zM61 16h2v-11h-2z" fill="#fff" shape-rendering="crispEdges"/>
</svg>
<div class="abs tray" style="left:1270px;top:5px;width:74px;line-height:15px;letter-spacing:-.35px">8:01 PM</div>
<div class="abs tray" style="left:1270px;top:22px;width:74px;line-height:15px;letter-spacing:-.2px">4/6/2016</div>
<div class="abs" style="left:1342px;top:0;width:23px;height:39px;border-left:1px solid #2c3a54;box-sizing:border-box;background:linear-gradient(160deg,rgba(255,255,255,.38) 0,rgba(255,255,255,.15) 30%,rgba(255,255,255,0) 45%,rgba(255,255,255,.02) 75%,rgba(140,180,240,.35) 100%);box-shadow:inset 1px 0 0 rgba(255,255,255,.35),inset -1px 0 0 rgba(255,255,255,.2)"></div>

</div>
</body>
</html>
